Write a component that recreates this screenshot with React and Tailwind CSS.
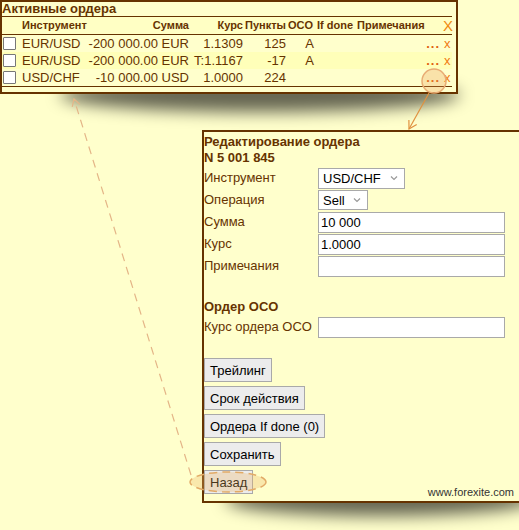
import React from "react";

const rows = [
  { id: 1, pair: "EUR/USD", sum: "-200 000.00 EUR", rate: "1.1309", pts: "125", oco: "A", hl: false },
  { id: 2, pair: "EUR/USD", sum: "-200 000.00 EUR", rate: "T:1.1167", pts: "-17", oco: "A", hl: true },
  { id: 3, pair: "USD/CHF", sum: "-10 000.00 USD", rate: "1.0000", pts: "224", oco: "", hl: false },
];

const Chevron = () => (
  <svg width="8" height="5" viewBox="0 0 8 5" className="absolute right-[7px] top-1/2 -translate-y-1/2 pointer-events-none">
    <polyline points="1,1 4,4 7,1" fill="none" stroke="#999" strokeWidth="1.2" />
  </svg>
);

const FormRow = ({ label, children }) => (
  <div className="flex items-center h-[22px]">
    <div className="w-[114px] shrink-0 whitespace-nowrap">{label}</div>
    {children}
  </div>
);

const TextField = ({ value }) => (
  <input
    type="text"
    defaultValue={value}
    className="w-[187px] h-[21px] border border-[#a9a9a9] bg-white px-[2px] text-[13px] text-black outline-none"
  />
);

const Btn = ({ children }) => (
  <button className="h-[24px] px-[5px] border border-[#a9a9a9] bg-[#ececec] text-[13px] font-normal text-black leading-none whitespace-nowrap">
    {children}
  </button>
);

export default function App() {
  return (
    <div className="relative w-[519px] h-[530px] overflow-hidden bg-[#ffffcc] font-['Liberation_Sans',Arial,sans-serif] text-[13px] text-[#663300]">
      {/* shadows */}
      <div className="absolute left-[60px] top-[78px] w-[400px] h-[34px] rounded-[50%] bg-black/60 blur-[8px]" />
      <div className="absolute left-[225px] top-[484px] w-[310px] h-[32px] rounded-[50%] bg-black/60 blur-[8px]" />

      {/* active orders */}
      <div className="relative z-10 w-[458px] border-2 border-[#663300] bg-[#ffffcc] pr-[4px] pb-[5px]">
        <div className="h-[14px] leading-[14px] font-bold text-[13px]">Активные ордера</div>
        <div className="flex h-[19px] items-center border-y border-[#663300] bg-[#ffffc4] text-[11px] font-bold whitespace-nowrap">
          <div className="w-[20px]" />
          <div className="w-[66px]">Инструмент</div>
          <div className="w-[101px] text-right">Сумма</div>
          <div className="w-[54px] text-right">Курс</div>
          <div className="w-[45px] pl-[2px]">Пункты</div>
          <div className="w-[29px]">OCO</div>
          <div className="w-[40px]">If done</div>
          <div className="w-[84px]">Примечания</div>
          <div className="w-[11px] pl-[2px] text-[15px] font-normal text-[#f08a10] leading-none">X</div>
        </div>
        <div className="border-b border-[#663300]">
          {rows.map((r) => (
            <div key={r.id} className={`flex h-[17px] items-center whitespace-nowrap ${r.hl ? "bg-[#ffffb9]" : ""}`}>
              <div className="w-[20px] flex items-center">
                <input
                  type="checkbox"
                  className="appearance-none ml-[1px] w-[13px] h-[13px] border border-[#777] bg-white rounded-[1px]"
                />
              </div>
              <div className="w-[66px]">{r.pair}</div>
              <div className="w-[101px] text-right">{r.sum}</div>
              <div className={`text-right ${r.rate.startsWith("T") ? "-ml-[3px] w-[57px]" : "w-[54px]"}`}>{r.rate}</div>
              <div className="w-[43px] text-right">{r.pts}</div>
              <div className="w-[28px] text-right">{r.oco}</div>
              <div className="w-[36px]" />
              <div className="w-[90px] text-right font-bold text-[#e06010] tracking-[1px]">...</div>
              <div className="w-[12px] pl-[4px] text-[#f07a10]">x</div>
            </div>
          ))}
        </div>
      </div>

      {/* edit order */}
      <div className="relative z-10 ml-[202px] mt-[36px] w-[322px] border-2 border-[#663300] bg-[#ffffcc] pt-[2px] pb-[7px]">
        <div className="leading-[16px] font-bold">Редактирование ордера</div>
        <div className="leading-[16px] font-bold">N 5 001 845</div>
        <div className="mt-[1px] flex flex-col">
          <FormRow label="Инструмент">
            <div className="relative">
              <select className="appearance-none w-[87px] h-[21px] border border-[#a9a9a9] bg-white pl-[4px] text-[13px] text-black">
                <option>USD/CHF</option>
              </select>
              <Chevron />
            </div>
          </FormRow>
          <FormRow label="Операция">
            <div className="relative">
              <select className="appearance-none w-[50px] h-[20px] border border-[#a9a9a9] bg-white pl-[4px] text-[13px] text-black">
                <option>Sell</option>
              </select>
              <Chevron />
            </div>
          </FormRow>
          <FormRow label="Сумма">
            <TextField value="10 000" />
          </FormRow>
          <FormRow label="Курс">
            <TextField value="1.0000" />
          </FormRow>
          <FormRow label="Примечания">
            <TextField value="" />
          </FormRow>
        </div>

        <div className="mt-[22px] leading-[16px] font-bold">Ордер OCO</div>
        <div className="mt-[1px]">
          <FormRow label="Курс ордера OCO">
            <TextField value="" />
          </FormRow>
        </div>

        <div className="mt-[20px] flex flex-col items-start gap-[4px]">
          <Btn>Трейлинг</Btn>
          <Btn>Срок действия</Btn>
          <Btn>Ордера If done (0)</Btn>
          <Btn>Сохранить</Btn>
          <div className="flex w-full items-end justify-between">
            <Btn>Назад</Btn>
            <span className="mr-[8px] mb-[-4px] text-[11px] leading-[11px] text-[#333]">www.forexite.com</span>
          </div>
        </div>
      </div>

      {/* annotations */}
      <svg className="absolute inset-0 z-20 pointer-events-none" width="519" height="530" viewBox="0 0 519 530">
        <circle cx="434" cy="81" r="12" fill="rgba(232,150,80,0.28)" stroke="#e8ac74" strokeWidth="1.5" />
        <line x1="429" y1="93" x2="409" y2="129" stroke="#e0913f" strokeWidth="1.2" />
        <polyline points="416.7,124.4 409,129 408.9,120" fill="none" stroke="#e0913f" strokeWidth="1.2" />
        <ellipse cx="228" cy="482" rx="38" ry="10" fill="rgba(236,180,100,0.3)" stroke="#e2aa66" strokeWidth="1.5" strokeDasharray="8 5" />
        <line x1="191" y1="475" x2="74" y2="99" stroke="#e4b587" strokeWidth="1.2" strokeDasharray="8 6" />
        <polyline points="72.2,106.8 74,99 79.9,104.4" fill="none" stroke="#e4b587" strokeWidth="1.2" />
      </svg>
    </div>
  );
}
